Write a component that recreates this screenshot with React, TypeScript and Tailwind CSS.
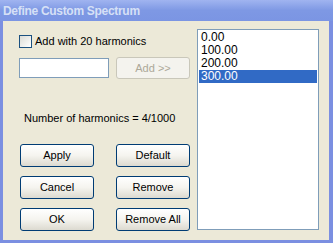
export default function App() {
  const items = ['0.00', '100.00', '200.00', '300.00']
  const selected = 3
  const font = { fontFamily: '"Liberation Sans", Arial, sans-serif' }

  const btn =
    'w-[74px] h-[23px] rounded-[3px] border border-[#003c74] bg-gradient-to-b from-[#ffffff] via-[#f5f4ef] to-[#dcdad0] text-[11px] text-black flex items-center justify-center'

  return (
    <div className="w-[333px] h-[243px] flex flex-col bg-[#7b8fe1] overflow-hidden" style={font}>
      {/* title bar */}
      <div className="h-[21px] flex items-center px-[3px] pt-[1px] bg-gradient-to-b from-[#a0b4f0] via-[#7e98e4] to-[#7b95e3]">
        <span className="text-[12px] font-bold text-[#d6e0f6] tracking-[-0.3px]">Define Custom Spectrum</span>
      </div>

      {/* body */}
      <div className="flex-1 flex ml-[3px] mr-[4px] mb-[3px] bg-[#ece9d8] pl-[16px] pt-[8px]">
        <div className="w-[171px] flex flex-col pt-[6px]">
          <label className="flex items-center gap-[3px] h-[13px]">
            <span className="w-[13px] h-[13px] border border-[#1c5180] bg-gradient-to-br from-[#dcdcd6] to-[#ffffff]" />
            <span className="text-[11px] text-black">Add with 20 harmonics</span>
          </label>

          <div className="flex items-center justify-between mt-[9px] h-[22px]">
            <div className="w-[90px] h-[20px] border border-[#7f9db9] bg-white" />
            <div className="w-[74px] h-[22px] rounded-[3px] border border-[#c9c7ba] bg-[#f4f3ee] text-[11px] text-[#aca899] flex items-center justify-center">
              Add &gt;&gt;
            </div>
          </div>

          <div className="mt-[33px] pl-[5px] h-[13px] leading-[13px] text-[11px] text-black">
            Number of harmonics = 4/1000
          </div>

          <div className="mt-[19px] grid grid-cols-2 gap-x-[22px] gap-y-[9px] pl-[1px]">
            <div className={btn}>Apply</div>
            <div className={btn}>Default</div>
            <div className={btn}>Cancel</div>
            <div className={btn}>Remove</div>
            <div className={btn}>OK</div>
            <div className={btn}>Remove All</div>
          </div>
        </div>

        <div className="ml-[7px] w-[122px] h-[201px] border border-[#7f9db9] bg-white p-[1px]">
          {items.map((it, i) => (
            <div
              key={it}
              className={
                'h-[13px] leading-[13px] text-[12px] pl-[2px] ' +
                (i === selected ? 'bg-[#316ac5] text-white' : 'text-black')
              }
            >
              {it}
            </div>
          ))}
        </div>
      </div>
    </div>
  )
}
